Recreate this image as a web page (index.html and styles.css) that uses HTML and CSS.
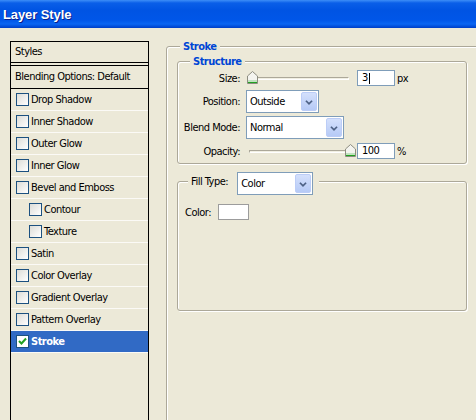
FILE: index.html
```html
<!DOCTYPE html>
<html>
<head>
    <title>Layer Style</title>
    <link rel="stylesheet" href="styles.css">
</head>
<body>
    <div class="titlebar">Layer Style</div>
    <div class="dialog">
        <div class="styles-list">
            <div class="list-head">Styles</div>
            <div class="list-blend">Blending Options: Default</div>
            <div class="list-item"><span class="check"></span>Drop Shadow</div>
            <div class="list-item"><span class="check"></span>Inner Shadow</div>
            <div class="list-item"><span class="check"></span>Outer Glow</div>
            <div class="list-item"><span class="check"></span>Inner Glow</div>
            <div class="list-item"><span class="check"></span>Bevel and Emboss</div>
            <div class="list-item sub"><span class="check"></span>Contour</div>
            <div class="list-item sub"><span class="check"></span>Texture</div>
            <div class="list-item"><span class="check"></span>Satin</div>
            <div class="list-item"><span class="check"></span>Color Overlay</div>
            <div class="list-item"><span class="check"></span>Gradient Overlay</div>
            <div class="list-item"><span class="check"></span>Pattern Overlay</div>
            <div class="list-item selected">
                <span class="check checked">
                    <svg width="11" height="11" viewBox="0 0 11 11"><path d="M2 5 L4.5 7.5 L9 2.5" fill="none" stroke="#21a121" stroke-width="2"/></svg>
                </span>Stroke
            </div>
        </div>

        <fieldset class="group outer">
            <legend>Stroke</legend>

            <fieldset class="group structure">
                <legend>Structure</legend>
                <div class="field">
                    <span class="field-label">Size:</span>
                    <div class="slider">
                        <svg class="thumb" style="left: 1px" width="11" height="13" viewBox="0 0 11 13"><path d="M5.5 0.5 L10.5 5 V12.5 H0.5 V5 Z" fill="#f4f4ef" stroke="#8c8c80"/><path d="M1 11 H10 V12 H1 Z" fill="#21a121"/><path d="M1 10 H10" stroke="#8fd18f"/></svg>
                    </div>
                    <span class="num">3<span class="caret"></span></span>
                    <span class="unit">px</span>
                </div>
                <div class="field">
                    <span class="field-label">Position:</span>
                    <div class="combo position">Outside<span class="combo-button"><svg width="16" height="19" viewBox="0 0 16 19"><path d="M4.5 7.5 L8 11 L11.5 7.5" fill="none" stroke="#4d6185" stroke-width="2"/></svg></span></div>
                </div>
                <div class="field">
                    <span class="field-label">Blend Mode:</span>
                    <div class="combo blend">Normal<span class="combo-button"><svg width="16" height="19" viewBox="0 0 16 19"><path d="M4.5 7.5 L8 11 L11.5 7.5" fill="none" stroke="#4d6185" stroke-width="2"/></svg></span></div>
                </div>
                <div class="field">
                    <span class="field-label">Opacity:</span>
                    <div class="slider">
                        <svg class="thumb" style="left: 99px" width="11" height="13" viewBox="0 0 11 13"><path d="M5.5 0.5 L10.5 5 V12.5 H0.5 V5 Z" fill="#f4f4ef" stroke="#8c8c80"/><path d="M1 11 H10 V12 H1 Z" fill="#21a121"/><path d="M1 10 H10" stroke="#8fd18f"/></svg>
                    </div>
                    <span class="num">100</span>
                    <span class="unit">%</span>
                </div>
            </fieldset>

            <fieldset class="group fill">
                <legend>
                    <span class="fill-label">Fill Type:</span>
                    <div class="combo filltype">Color<span class="combo-button"><svg width="16" height="19" viewBox="0 0 16 19"><path d="M4.5 7.5 L8 11 L11.5 7.5" fill="none" stroke="#4d6185" stroke-width="2"/></svg></span></div>
                </legend>
                <div class="field">
                    <span class="color-label">Color:</span>
                    <span class="swatch"></span>
                </div>
            </fieldset>
        </fieldset>
    </div>
</body>
</html>
```

FILE: styles.css
```css
body {
    margin: 0;
    height: 420px;
    overflow: hidden;
    background-color: #ece9d8;
    font-family: "DejaVu Sans Condensed", "DejaVu Sans", sans-serif;
    font-stretch: condensed;
    font-size: 11px;
    letter-spacing: -0.5px;
    color: #000;
}

/* XP style caption */
.titlebar {
    height: 28px;
    box-sizing: border-box;
    padding: 7px 0 0 3px;
    background: linear-gradient(#3d8ef7 0, #0a5fe8 3px, #0054e3 10px, #0056e8 20px, #0a66f2 24px, #0048d4 27px, #003fc4 28px);
    color: #fff;
    font-family: "Liberation Sans", sans-serif;
    font-stretch: normal;
    font-weight: bold;
    font-size: 13px;
    line-height: 16px;
    letter-spacing: -0.1px;
    text-shadow: 1px 1px 0 #0a1f8a;
}

.dialog {
    display: flex;
    align-items: flex-start;
    height: 392px;
    overflow: hidden;
}

/* left list */
.styles-list {
    width: 139px;
    height: 400px;
    margin: 13px 0 0 10px;
    box-sizing: border-box;
    border: 1px solid #000;
    flex-shrink: 0;
}

.list-head {
    height: 20px;
    line-height: 20px;
    padding-left: 4px;
    border-bottom: 1px solid #000;
}

.list-blend {
    height: 22px;
    line-height: 22px;
    margin-top: 2px;
    padding-left: 4px;
    border-top: 1px solid #000;
    border-bottom: 1px solid #000;
    white-space: nowrap;
}

.list-item {
    height: 21px;
    display: flex;
    align-items: center;
    padding-left: 5px;
    border-bottom: 1px solid #fbfaf6;
    white-space: nowrap;
}

.list-item.sub {
    padding-left: 18px;
}

.list-item.selected {
    background: #316ac5;
    color: #fff;
    font-weight: bold;
}

.check {
    width: 13px;
    height: 13px;
    box-sizing: border-box;
    margin-right: 2px;
    border: 1px solid #1c5180;
    background: linear-gradient(135deg, #dcdcd7, #fff);
    display: flex;
    align-items: center;
    justify-content: center;
}

.check.checked {
    background: #fff;
}

/* group boxes */
.group {
    margin: 0;
    padding: 0;
    min-width: 0;
    border: 1px solid #aca899;
    border-radius: 3px;
    box-shadow: inset 1px 1px 0 #fff, 1px 1px 0 #fff;
}

.group legend {
    padding: 0 3px;
    line-height: 13px;
    font-weight: bold;
    color: #0046d5;
    background: #ece9d8;
}

.outer {
    width: 330px;
    height: 420px;
    margin: 12px 0 0 17px;
    padding: 2px 0 0 10px;
    flex-shrink: 0;
}

.outer > legend {
    margin-left: 3px;
}

.structure {
    width: 290px;
    box-sizing: border-box;
    padding: 2px 0 4px 0;
}

.structure > legend {
    margin-left: 12px;
}

.field {
    display: flex;
    align-items: center;
    white-space: nowrap;
}

.field + .field {
    margin-top: 4px;
}

.field:nth-of-type(3) {
    margin-top: 3px;
}

.field-label {
    width: 62px;
    margin-right: 6px;
    text-align: right;
}

.slider {
    position: relative;
    width: 108px;
    height: 14px;
}

.slider::before {
    content: "";
    position: absolute;
    left: 3px;
    right: 5px;
    top: 6px;
    height: 1px;
    background: #f1efe2;
    border-top: 1px solid #aca899;
    border-left: 1px solid #aca899;
    border-bottom: 1px solid #fff;
    border-right: 1px solid #fff;
}

.thumb {
    position: absolute;
    top: 0;
}

.num {
    width: 38px;
    height: 16px;
    box-sizing: border-box;
    margin-left: 3px;
    padding-left: 4px;
    line-height: 14px;
    border: 1px solid #7f9db9;
    background: #fff;
    display: flex;
    align-items: center;
}

.caret {
    width: 1px;
    height: 11px;
    margin-left: 1px;
    background: #000;
}

.unit {
    margin-left: 2px;
}

.combo {
    height: 23px;
    box-sizing: border-box;
    display: flex;
    align-items: center;
    padding-left: 3px;
    border: 1px solid #7f9db9;
    background: #fff;
    color: #000;
    font-weight: normal;
}

.combo.position {
    width: 73px;
}

.combo.blend {
    width: 98px;
}

.combo.filltype {
    width: 76px;
}

.combo-button {
    margin: 0 1px 0 auto;
    width: 16px;
    height: 19px;
    box-sizing: border-box;
    border: 1px solid #bccdf7;
    border-radius: 2px;
    background: linear-gradient(#d4e0fc, #b6caf6);
    display: flex;
}

.fill {
    width: 290px;
    box-sizing: border-box;
    margin-top: 3px;
    padding: 9px 0 90px 7px;
}

.fill > legend {
    display: flex;
    align-items: center;
    margin-left: 3px;
    padding: 5px 6px 0 3px;
    font-weight: normal;
    color: #000;
}

.fill-label {
    margin: 0 9px 4px 0;
}

.color-label {
    margin-right: 7px;
}

.swatch {
    width: 31px;
    height: 16px;
    box-sizing: border-box;
    border: 1px solid #9c9c9c;
    background: #fff;
}
```
